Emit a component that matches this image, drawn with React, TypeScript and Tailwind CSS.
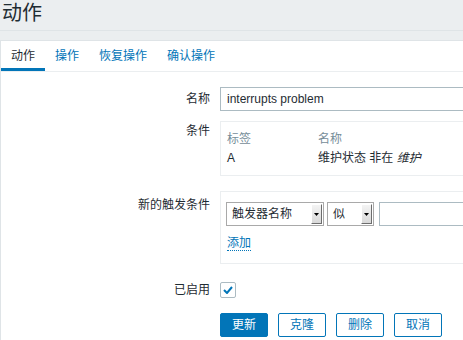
const font = { fontFamily: '"Liberation Sans", "Noto Sans CJK SC", Arial, sans-serif' };

function Select({ label, width }: { label: string; width: string }) {
  return (
    <div className={`flex h-[24px] ${width} items-stretch border border-[#a9a9a9] bg-white p-[1px]`}>
      <span className="flex flex-1 items-center pl-[4px] text-[12px] text-[#1f2c33]">{label}</span>
      <span className="flex w-[11px] items-center justify-center border-t border-l border-t-white border-l-white border-r border-b border-r-[#6d6d6d] border-b-[#6d6d6d] bg-gradient-to-b from-[#f4f4f4] to-[#d9d9d9]">
        <svg width="5" height="3" viewBox="0 0 5 3">
          <path d="M0 0h5L2.5 3z" fill="#000" />
        </svg>
      </span>
    </div>
  );
}

function Row({ label, children, labelClass = '' }: { label: string; children: React.ReactNode; labelClass?: string }) {
  return (
    <div className="flex">
      <div className={`w-[209px] shrink-0 text-right text-[12px] text-[#1f2c33] ${labelClass}`}>{label}</div>
      <div className="ml-[10px] flex-1">{children}</div>
    </div>
  );
}

export default function App() {
  return (
    <div className="h-[340px] w-[463px] overflow-hidden bg-[#ebeef0]" style={font}>
      <div className="h-[31px] border-b border-[#dfe4e7] pl-[2px] pt-[1px]">
        <h1 className="text-[20px] leading-[24px] text-[#1f2c33]">动作</h1>
      </div>
      <div className="mt-[9px] h-[300px] w-[700px] border-t border-l border-[#dfe4e7] bg-white">
        <div className="flex h-[31px] border-b border-[#ebeef0] text-[12px]">
          <div className="flex items-center border-b-[3px] border-[#0275b8] px-[10px] pt-[3px] text-[#1f2c33]">动作</div>
          <div className="flex items-center px-[10px] text-[#0275b8]">操作</div>
          <div className="flex items-center px-[10px] text-[#0275b8]">恢复操作</div>
          <div className="flex items-center px-[10px] text-[#0275b8]">确认操作</div>
        </div>
        <div className="pt-[15px]">
          <Row label="名称" labelClass="leading-[24px]">
            <div className="flex h-[24px] w-[453px] items-center border border-[#acbbc2] px-[6px] text-[12px] text-[#1f2c33]">
              interrupts problem
            </div>
          </Row>
          <div className="mt-[10px]">
            <Row label="条件" labelClass="pt-[1px]">
              <div className="h-[55px] w-[453px] border border-[#ebeef0] px-[6px] pt-[8px] text-[12px] leading-[19px]">
                <div className="flex text-[#768d99]">
                  <span className="w-[91px]">标签</span>
                  <span>名称</span>
                </div>
                <div className="flex text-[#1f2c33]">
                  <span className="w-[91px]">A</span>
                  <span>
                    维护状态 非在 <i>维护</i>
                  </span>
                </div>
              </div>
            </Row>
          </div>
          <div className="mt-[15px]">
            <Row label="新的触发条件" labelClass="pt-[5px]">
              <div className="h-[73px] w-[453px] border border-[#ebeef0] px-[5px] pt-[10px]">
                <div className="flex gap-[3px]">
                  <Select label="触发器名称" width="w-[98px]" />
                  <Select label="似" width="w-[47px]" />
                  <div className="ml-[2px] h-[24px] w-[200px] border border-[#acbbc2]" />
                </div>
                <div className="mt-[8px] pl-[1px] text-[12px] leading-[18px]">
                  <span className="border-b border-dotted border-[#0275b8] text-[#0275b8]">添加</span>
                </div>
              </div>
            </Row>
          </div>
          <div className="mt-[18px]">
            <Row label="已启用" labelClass="leading-[16px]">
              <div className="flex h-[16px] w-[16px] items-center justify-center rounded-[2px] border border-[#acbbc2]">
                <svg width="10" height="8" viewBox="0 0 10 8">
                  <path d="M1 4l3 3 5-6" fill="none" stroke="#0275b8" strokeWidth="2" />
                </svg>
              </div>
            </Row>
          </div>
          <div className="ml-[219px] mt-[15px] flex gap-[10px] text-[12px]">
            <button className="h-[24px] w-[48px] rounded-[2px] border border-[#0275b8] bg-[#0275b8] text-white">更新</button>
            <button className="h-[24px] w-[48px] rounded-[2px] border border-[#0275b8] bg-white text-[#0275b8]">克隆</button>
            <button className="h-[24px] w-[48px] rounded-[2px] border border-[#0275b8] bg-white text-[#0275b8]">删除</button>
            <button className="h-[24px] w-[48px] rounded-[2px] border border-[#0275b8] bg-white text-[#0275b8]">取消</button>
          </div>
        </div>
      </div>
    </div>
  );
}
